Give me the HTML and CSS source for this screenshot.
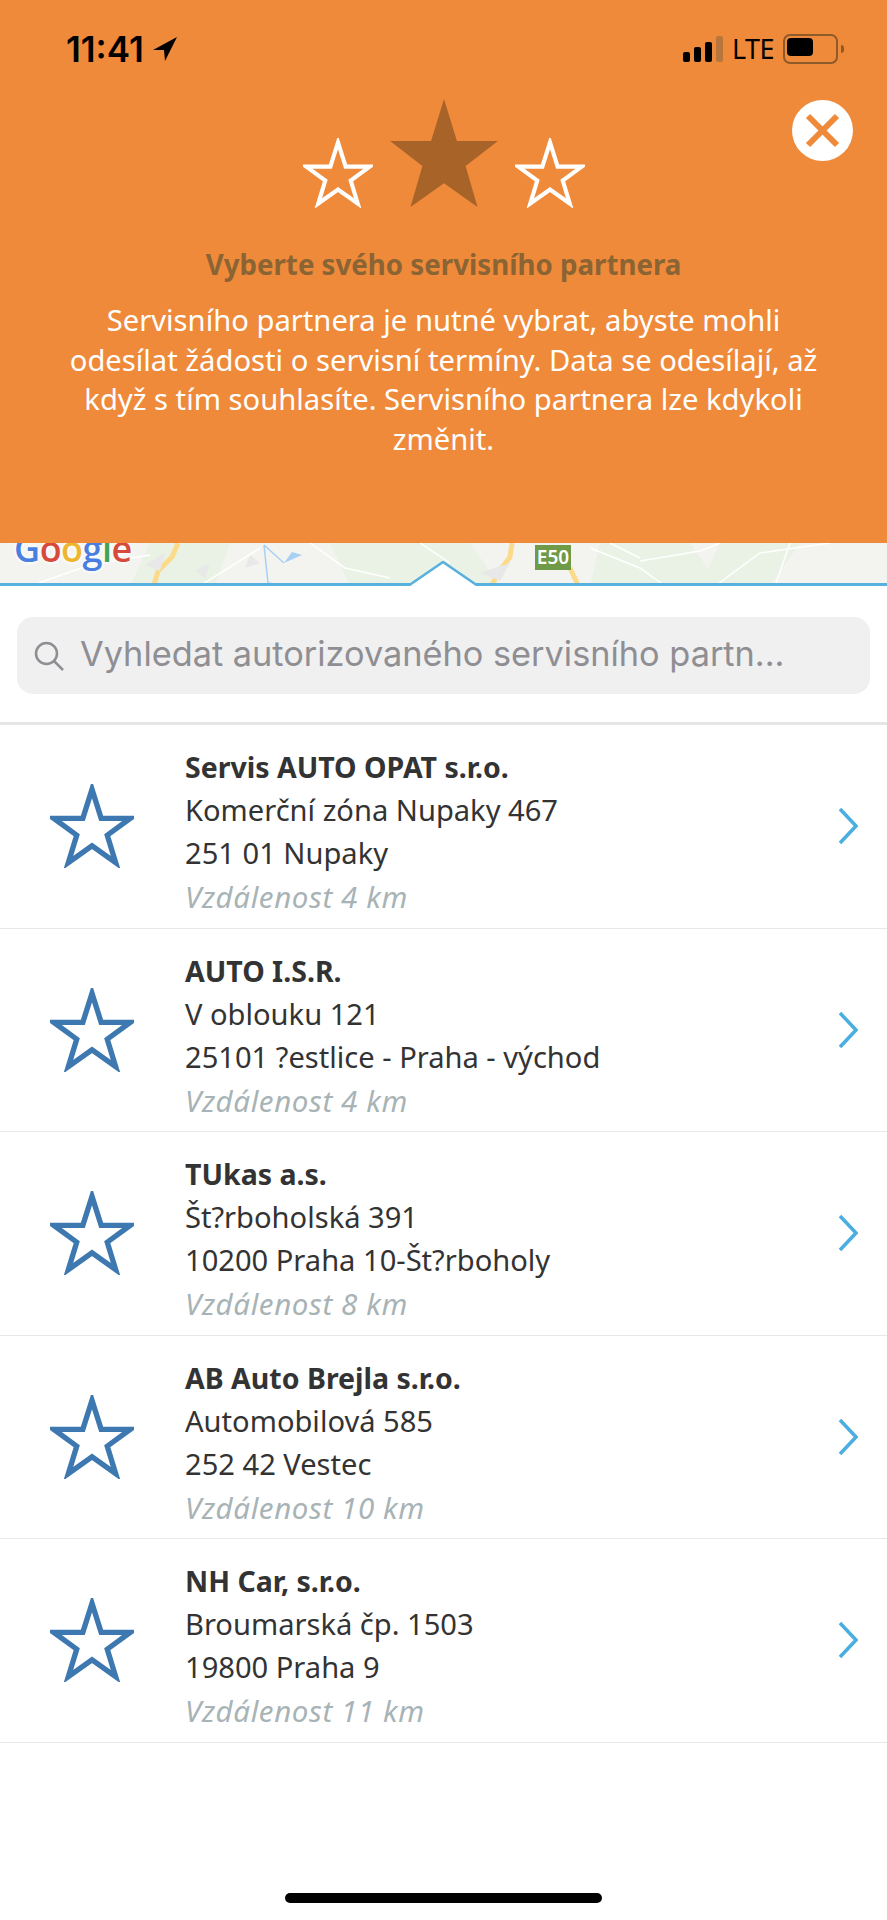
FILE: index.html

```html
<!DOCTYPE html>
<html lang="cs">
<head>
  <meta charset="UTF-8" />
  <title>Výběr servisního partnera</title>
  <link rel="stylesheet" href="styles.css">
</head>
<body>

<svg class="defs" width="0" height="0">
  <symbol id="star" viewBox="-5 -7 110 110">
    <polygon points="50,0 62,38 100,38 70,60 81,96 50,74 19,96 30,60 0,38 38,38" />
  </symbol>
</svg>

<div class="banner">
  <div class="status">
    <div class="status-left">
      <span class="time">11:41</span>
      <svg class="loc" viewBox="0 0 24 24"><path d="M24 0 L0 13 L11 13 L12 24 Z" /></svg>
    </div>
    <div class="status-right">
      <div class="signal">
        <i class="s1"></i><i class="s2"></i><i class="s3"></i><i class="s4"></i>
      </div>
      <span class="lte">LTE</span>
      <div class="battery"><div class="battery-fill"></div></div>
      <div class="battery-nub"></div>
    </div>
  </div>

  <div class="close">
    <svg viewBox="0 0 61 61"><path d="M16 16 L45 45 M45 16 L16 45" /></svg>
  </div>

  <div class="stars">
    <svg class="star-small"><use href="#star" /></svg>
    <svg class="star-big" viewBox="0 0 100 100"><polygon points="50,0 62,39 100,39 70,62 81,100 50,78 19,100 30,62 0,39 38,39" /></svg>
    <svg class="star-small"><use href="#star" /></svg>
  </div>

  <h1>Vyberte svého servisního partnera</h1>
  <p>Servisního partnera je nutné vybrat, abyste mohli odesílat žádosti o servisní termíny. Data se odesílají, až když s tím souhlasíte. Servisního partnera lze kdykoli změnit.</p>
</div>

<div class="map">
  <svg class="map-bg" viewBox="0 0 887 43" preserveAspectRatio="none">
    <rect width="887" height="43" fill="#f3f3f0" />
    <path d="M150 0 L230 0 L215 43 L130 43 Z M330 0 L470 0 L500 43 L350 43 Z M600 0 L690 0 L720 43 L590 43 Z M720 0 L800 0 L770 43 L700 43 Z" fill="#e9f2e5" />
    <path d="M30 43 L90 22 L150 12 M200 43 L260 5 M310 0 L345 25 L390 35 M420 0 L450 20 M590 5 L640 25 L665 43 M610 0 L640 15 M640 18 L700 8 L720 0 M715 43 L760 10 L830 0 M790 0 L775 43" fill="none" stroke="#fff" stroke-width="1.5" />
    <path d="M178 0 L172 14 L158 28 L154 42" fill="none" stroke="#fbdb8a" stroke-width="5" />
    <path d="M512 0 L510 14 L498 30 L492 42 M570 25 L578 42" fill="none" stroke="#fbdb8a" stroke-width="5" />
    <path d="M264 2 L268 40 L280 42 M264 2 L284 20" fill="none" stroke="#a8d0f5" stroke-width="1.5" />
    <path d="M284 20 L302 12 L292 9 Z" fill="#a8d0f5" />
    <path d="M145 22 L165 10 L160 28 Z M250 12 L260 20 L245 25 Z M195 28 L210 20 L205 35 Z M480 30 L510 20 L500 38 Z" fill="#e8e8e8" />
  </svg>
  <div class="google"><span class="g-blue">G</span><span class="g-red">o</span><span class="g-yellow">o</span><span class="g-blue">g</span><span class="g-green">l</span><span class="g-red">e</span></div>
  <div class="road-badge">E50</div>
  <div class="map-line"></div>
  <svg class="notch" viewBox="0 0 70 26"><path d="M0 25 L35 1 L70 25" /></svg>
</div>

<div class="search-wrap">
  <div class="search">
    <svg class="search-icon" viewBox="0 0 30 30"><circle cx="12.5" cy="12.5" r="10.5" /><path d="M20 20 L29 29" /></svg>
    <span>Vyhledat autorizovaného servisního partn...</span>
  </div>
</div>

<div class="list">
  <div class="row">
    <svg class="row-star"><use href="#star" /></svg>
    <div class="info">
      <div class="name">Servis AUTO OPAT s.r.o.</div>
      <div>Komerční zóna Nupaky 467</div>
      <div>251 01 Nupaky</div>
      <div class="dist">Vzdálenost 4 km</div>
    </div>
    <svg class="chev" viewBox="0 0 20 38"><path d="M2 2 L18 19 L2 36" /></svg>
  </div>
  <div class="row">
    <svg class="row-star"><use href="#star" /></svg>
    <div class="info">
      <div class="name">AUTO I.S.R.</div>
      <div>V oblouku 121</div>
      <div>25101 ?estlice - Praha - východ</div>
      <div class="dist">Vzdálenost 4 km</div>
    </div>
    <svg class="chev" viewBox="0 0 20 38"><path d="M2 2 L18 19 L2 36" /></svg>
  </div>
  <div class="row">
    <svg class="row-star"><use href="#star" /></svg>
    <div class="info">
      <div class="name">TUkas a.s.</div>
      <div>Št?rboholská 391</div>
      <div>10200 Praha 10-Št?rboholy</div>
      <div class="dist">Vzdálenost 8 km</div>
    </div>
    <svg class="chev" viewBox="0 0 20 38"><path d="M2 2 L18 19 L2 36" /></svg>
  </div>
  <div class="row">
    <svg class="row-star"><use href="#star" /></svg>
    <div class="info">
      <div class="name">AB Auto Brejla s.r.o.</div>
      <div>Automobilová 585</div>
      <div>252 42 Vestec</div>
      <div class="dist">Vzdálenost 10 km</div>
    </div>
    <svg class="chev" viewBox="0 0 20 38"><path d="M2 2 L18 19 L2 36" /></svg>
  </div>
  <div class="row">
    <svg class="row-star"><use href="#star" /></svg>
    <div class="info">
      <div class="name">NH Car, s.r.o.</div>
      <div>Broumarská čp. 1503</div>
      <div>19800 Praha 9</div>
      <div class="dist">Vzdálenost 11 km</div>
    </div>
    <svg class="chev" viewBox="0 0 20 38"><path d="M2 2 L18 19 L2 36" /></svg>
  </div>
</div>

<div class="home-bar"></div>

</body>
</html>
```

FILE: styles.css

```css
html, body { margin: 0; padding: 0; }
body { width: 887px; height: 1920px; background: #fff; font-family: "Noto Sans", sans-serif; color: #333; overflow: hidden; position: relative; }
.defs { position: absolute; }

.banner { background: #f08a3b; height: 543px; box-sizing: border-box; position: relative; text-align: center; }

.status { display: flex; justify-content: space-between; align-items: center; height: 26px; padding: 36px 43px 0 66px; }
.status-left { display: flex; align-items: center; gap: 9px; }
.time { font-family: Inter, sans-serif; font-weight: 600; font-size: 35px; letter-spacing: 0; color: #000; line-height: 26px; }
.loc { width: 24px; height: 24px; fill: #000; }
.status-right { display: flex; align-items: center; }
.signal { display: flex; align-items: flex-end; gap: 4px; height: 26px; }
.signal i { width: 7px; border-radius: 2px; background: #000; display: block; }
.signal .s1 { height: 10px; }
.signal .s2 { height: 15px; }
.signal .s3 { height: 20px; }
.signal .s4 { height: 26px; background: #b9763c; }
.lte { font-size: 27px; color: #000; line-height: 26px; margin-left: 9px; width: 41px; text-align: left; letter-spacing: -0.5px; }
.battery { width: 47px; height: 22px; border: 2px solid #8f5a2a; border-radius: 7px; margin-left: 10px; padding: 2px; }
.battery-fill { width: 26px; height: 18px; background: #000; border-radius: 4px; }
.battery-nub { width: 3px; height: 8px; background: #8f5a2a; border-radius: 0 3px 3px 0; margin-left: 3px; }

.close { position: absolute; left: 792px; top: 100px; width: 61px; height: 61px; border-radius: 50%; background: #fff; }
.close svg { display: block; width: 61px; height: 61px; }
.close path { fill: none; stroke: #f08a3b; stroke-width: 6; }

.stars { display: flex; justify-content: center; align-items: flex-end; gap: 15px; margin-top: 37px; }
.star-small { width: 70px; height: 70px; margin: 0 0 -1px; fill: none; stroke: #fff; stroke-width: 6.5; display: block; }
.star-big { width: 112px; height: 108px; fill: #a86329; display: block; }

h1 { margin: 37px 0 0; font-size: 27.7px; line-height: 40px; font-weight: 700; color: #8a6433; }
.banner p { margin: 17px auto 0; width: 760px; font-size: 29.2px; line-height: 39.5px; color: #fff; }

.map { height: 43px; position: relative; overflow: hidden; }
.map-bg { display: block; width: 887px; height: 43px; }
.google { position: absolute; left: 14px; top: -20px; font-family: "Open Sans", sans-serif; font-size: 36px; line-height: 52px; font-weight: 600; letter-spacing: -0.5px; text-shadow: 0 0 4px #fff, 0 0 4px #fff; }
.g-blue { color: #4a7fe0; }
.g-red { color: #d64a3c; }
.g-yellow { color: #edb62f; }
.g-green { color: #3fa356; }
.road-badge { position: absolute; left: 535px; top: 2px; width: 36px; height: 25px; background: #6f9a47; color: #fff; font-size: 19px; font-weight: 600; line-height: 25px; text-align: center; }
.map-line { position: absolute; left: 0; right: 0; bottom: 0; height: 3px; background: #57b0de; }
.notch { position: absolute; left: 408px; bottom: -1px; width: 70px; height: 26px; display: block; }
.notch path { fill: #fff; stroke: #57b0de; stroke-width: 2.5; }

.search-wrap { padding: 31px 17px 28px; border-bottom: 3px solid #e6e6e8; }
.search { height: 77px; background: #f0f0f1; border-radius: 16px; display: flex; align-items: center; padding-left: 17px; gap: 16px; }
.search-icon { width: 30px; height: 30px; fill: none; stroke: #8e8e93; stroke-width: 2.5; flex: none; }
.search span { font-family: Inter, sans-serif; font-size: 34.3px; line-height: 70px; padding-bottom: 3px; color: #8e8e93; white-space: nowrap; }

.row { height: 203.5px; box-sizing: border-box; border-bottom: 1px solid #e8e8e8; display: flex; align-items: center; }
.row-star { width: 84px; height: 84px; margin-left: 50px; flex: none; fill: none; stroke: #3d78b0; stroke-width: 7; display: block; }
.info { margin-left: 51px; flex: 1; font-size: 29.1px; line-height: 43px; padding-top: 12px; white-space: nowrap; }
.name { font-weight: 700; font-size: 28.5px; }
.dist { font-style: italic; font-size: 29.5px; letter-spacing: 0.6px; color: #a8b3b6; }
.chev { width: 20px; height: 38px; margin-right: 29px; flex: none; fill: none; stroke: #4aaee0; stroke-width: 3.5; }

.home-bar { position: absolute; left: 285px; top: 1893px; width: 317px; height: 10px; border-radius: 5px; background: #000; }
```
